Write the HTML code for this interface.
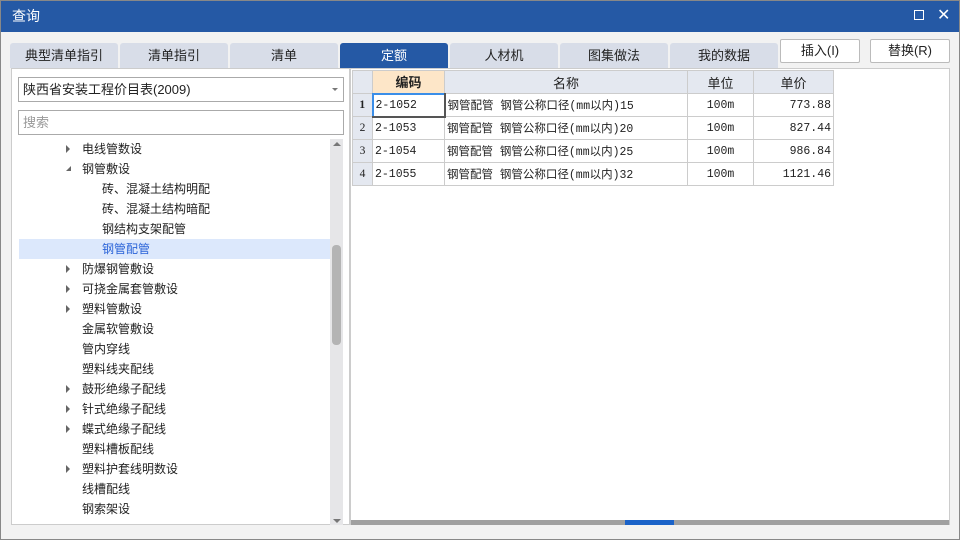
<!DOCTYPE html>
<html><head><meta charset="utf-8"><style>
*{margin:0;padding:0;box-sizing:border-box}
body{width:960px;height:540px;background:#f2f2f2;font-family:"Liberation Sans","Noto Sans CJK SC",sans-serif;font-size:12px;color:#222;position:relative;overflow:hidden}
.abs{position:absolute}
.frame{left:0;top:0;width:960px;height:540px;border:1px solid #888;pointer-events:none}
.title{left:0;top:0;width:960px;height:32px;background:#2559a5;color:#fff;font-size:14px;line-height:32px;padding-left:12px}
.tab{top:43px;height:25px;width:108px;background:#d8dde8;text-align:center;line-height:25px;font-size:13px;border-radius:3px 3px 0 0;color:#222}
.tab.on{background:#2559a5;color:#fff}
.btn{top:39px;height:24px;width:80px;background:#fff;border:1px solid #bbb;border-radius:2px;text-align:center;line-height:22px;font-size:13px}
.left{left:11px;top:68px;width:339px;height:457px;background:#fff;border:1px solid #ccc}
.input{background:#fff;border:1px solid #aaa;height:25px;line-height:23px;padding-left:4px;font-size:13px}
.tree div{position:absolute;height:20px;line-height:20px;font-size:12px;white-space:nowrap}
.arr{position:absolute;width:0;height:0;border-top:4px solid transparent;border-bottom:4px solid transparent;border-left:4px solid #666}
.right{left:350px;top:68px;width:600px;height:457px;background:#fff;border:1px solid #ccc}
table{border-collapse:collapse;table-layout:fixed;width:481px;position:absolute;left:1px;top:1px;font-family:"Liberation Mono","Noto Sans CJK SC",monospace;font-size:11.5px}
td{border:1px solid #ccc;height:23px;padding:0 2px;white-space:nowrap;overflow:hidden}
th{background:#e4e8f0;border:1px solid #ccc;height:23px;font-weight:normal;font-family:"Liberation Sans","Noto Sans CJK SC",sans-serif;font-size:13px}
.rh{background:#e4e8f0;text-align:center;font-family:"Liberation Serif",serif}
</style></head><body>
<div class="abs title">查询</div>
<div class="abs" style="left:914px;top:10px;width:10px;height:10px;border:1.5px solid #fff"></div>
<div class="abs" style="left:937px;top:5px;color:#fff;font-size:16px">✕</div>
<div class="abs tab" style="left:10px">典型清单指引</div>
<div class="abs tab" style="left:120px">清单指引</div>
<div class="abs tab" style="left:230px">清单</div>
<div class="abs tab on" style="left:340px">定额</div>
<div class="abs tab" style="left:450px">人材机</div>
<div class="abs tab" style="left:560px">图集做法</div>
<div class="abs tab" style="left:670px">我的数据</div>
<div class="abs btn" style="left:780px">插入(I)</div>
<div class="abs btn" style="left:870px">替换(R)</div>
<div class="abs left"></div>
<div class="abs input" style="left:18px;top:77px;width:326px">陕西省安装工程价目表(2009)</div>
<div class="abs" style="left:332px;top:88px;border-left:3px solid transparent;border-right:3px solid transparent;border-top:3px solid #777"></div>
<div class="abs input" style="left:18px;top:110px;width:326px;color:#999">搜索</div>
<div class="abs" style="left:19px;top:239px;width:311px;height:20px;background:#dce8fc"></div>
<div class="tree">
<span class="arr" style="left:66px;top:145px"></span><div style="left:82px;top:139px">电线管数设</div>
<span class="abs" style="left:66px;top:166px;border-left:5px solid transparent;border-bottom:5px solid #666"></span><div style="left:82px;top:159px">钢管敷设</div>
<div style="left:102px;top:179px">砖、混凝土结构明配</div>
<div style="left:102px;top:199px">砖、混凝土结构暗配</div>
<div style="left:102px;top:219px">钢结构支架配管</div>
<div style="left:102px;top:239px;color:#2a63d8">钢管配管</div>
<span class="arr" style="left:66px;top:265px"></span><div style="left:82px;top:259px">防爆钢管敷设</div>
<span class="arr" style="left:66px;top:285px"></span><div style="left:82px;top:279px">可挠金属套管敷设</div>
<span class="arr" style="left:66px;top:305px"></span><div style="left:82px;top:299px">塑料管敷设</div>
<div style="left:82px;top:319px">金属软管敷设</div>
<div style="left:82px;top:339px">管内穿线</div>
<div style="left:82px;top:359px">塑料线夹配线</div>
<span class="arr" style="left:66px;top:385px"></span><div style="left:82px;top:379px">鼓形绝缘子配线</div>
<span class="arr" style="left:66px;top:405px"></span><div style="left:82px;top:399px">针式绝缘子配线</div>
<span class="arr" style="left:66px;top:425px"></span><div style="left:82px;top:419px">蝶式绝缘子配线</div>
<div style="left:82px;top:439px">塑料槽板配线</div>
<span class="arr" style="left:66px;top:465px"></span><div style="left:82px;top:459px">塑料护套线明数设</div>
<div style="left:82px;top:479px">线槽配线</div>
<div style="left:82px;top:499px">钢索架设</div>
</div>
<div class="abs" style="left:330px;top:139px;width:13px;height:386px;background:#e6e6e8"></div>
<div class="abs" style="left:332px;top:245px;width:9px;height:100px;background:#b4b4b4;border-radius:4px"></div>
<div class="abs" style="left:333px;top:142px;border-left:4px solid transparent;border-right:4px solid transparent;border-bottom:4px solid #777"></div>
<div class="abs" style="left:333px;top:519px;border-left:4px solid transparent;border-right:4px solid transparent;border-top:4px solid #777"></div>
<div class="abs right">
<table>
<colgroup><col style="width:20px"><col style="width:72px"><col style="width:243px"><col style="width:66px"><col style="width:80px"></colgroup>
<tr><th></th><th style="background:#fde6c8;font-weight:bold">编码</th><th>名称</th><th>单位</th><th>单价</th></tr>
<tr><td class="rh" style="font-weight:bold">1</td><td style="border:2px solid #555;border-left-color:#3b8ee8;border-top-color:#3b8ee8">2-1052</td><td>钢管配管 钢管公称口径(mm以内)15</td><td style="text-align:center">100m</td><td style="text-align:right">773.88</td></tr>
<tr><td class="rh">2</td><td>2-1053</td><td>钢管配管 钢管公称口径(mm以内)20</td><td style="text-align:center">100m</td><td style="text-align:right">827.44</td></tr>
<tr><td class="rh">3</td><td>2-1054</td><td>钢管配管 钢管公称口径(mm以内)25</td><td style="text-align:center">100m</td><td style="text-align:right">986.84</td></tr>
<tr><td class="rh">4</td><td>2-1055</td><td>钢管配管 钢管公称口径(mm以内)32</td><td style="text-align:center">100m</td><td style="text-align:right">1121.46</td></tr>
</table>
</div>
<div class="abs" style="left:351px;top:520px;width:598px;height:5px;background:#a0a0a0"></div>
<div class="abs" style="left:625px;top:520px;width:49px;height:5px;background:#1a62c8"></div>
<div class="abs frame"></div>
</body></html>
